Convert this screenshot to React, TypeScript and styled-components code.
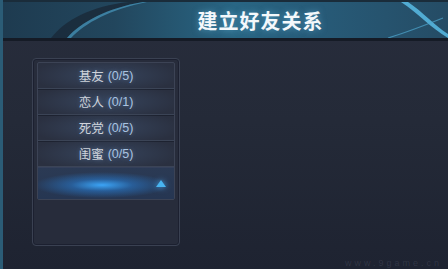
import React from "react";
import styled, { createGlobalStyle } from "styled-components";

const GlobalStyle = createGlobalStyle`
  html, body {
    margin: 0;
    padding: 0;
    background: #1e2331;
  }
  body {
    font-family: "Noto Sans CJK SC", "Liberation Sans", sans-serif;
  }
`;

const Screen = styled.div`
  position: relative;
  width: 448px;
  height: 269px;
  overflow: hidden;
  background: linear-gradient(180deg, #282d3c 0%, #242a38 45%, #1e2331 100%);
  border-left: 3px solid #2b5c76;
  box-sizing: border-box;
  display: flex;
  flex-direction: column;
`;

const Header = styled.div`
  position: relative;
  box-sizing: border-box;
  height: 41px;
  flex: none;
  background: linear-gradient(
    90deg,
    #1e3b50 0%,
    #22465d 25%,
    #296684 52%,
    #275a77 72%,
    #254c65 100%
  );
  border-top: 2px solid #1a2c3a;
  border-bottom: 3px solid #151b26;
  display: flex;
  align-items: center;
  justify-content: center;
`;

const Swoosh = styled.svg`
  position: absolute;
  inset: 0;
  width: 100%;
  height: 100%;
  pointer-events: none;
`;

const Title = styled.h1`
  position: relative;
  margin: 0 0 0 70px;
  font-family: "Noto Sans CJK SC", sans-serif;
  font-size: 20px;
  font-weight: 700;
  letter-spacing: 1px;
  color: #f4f8fb;
  text-shadow: 0 0 6px rgba(120, 200, 240, 0.5);
`;

const Body = styled.div`
  flex: 1;
  padding: 17px 0 0 29px;
  position: relative;
`;

const Panel = styled.div`
  width: 148px;
  height: 188px;
  box-sizing: border-box;
  border: 1px solid #3a4152;
  border-radius: 4px;
  background: #272c3b;
  padding: 3px 4px;
  box-shadow: inset 0 0 0 1px #1c2030;
`;

const List = styled.div`
  border: 1px solid #3c4355;
  border-radius: 2px;
  background: #2a3040;
  display: flex;
  flex-direction: column;
`;

const Row = styled.div`
  box-sizing: border-box;
  height: 26px;
  display: flex;
  align-items: center;
  justify-content: center;
  font-family: "Noto Sans CJK SC", "Liberation Sans", sans-serif;
  font-size: 12.5px;
  color: #cfd3da;
  text-shadow: 0 0 4px rgba(130, 170, 220, 0.4);
  background: radial-gradient(
    ellipse 55% 70% at 50% 50%,
    rgba(70, 95, 130, 0.45),
    rgba(42, 48, 64, 0) 100%
  );
  border-bottom: 1px solid #3b4456;
  box-shadow: 0 1px 0 #1d2230;
`;

const Count = styled.span`
  margin-left: 4px;
  color: #a9c3e0;
  font-family: "Liberation Sans", sans-serif;
`;

const Expander = styled.div`
  position: relative;
  height: 31px;
  display: flex;
  align-items: center;
  justify-content: flex-end;
  padding-right: 8px;
  background: radial-gradient(
      ellipse 50% 42% at 47% 55%,
      rgba(60, 170, 255, 0.95),
      rgba(40, 130, 220, 0.5) 45%,
      rgba(30, 70, 120, 0) 100%
    ),
    linear-gradient(180deg, #2b3a54 0%, #263652 100%);
  border-top: 1px solid #35405a;
`;

const Arrow = styled.svg`
  width: 10px;
  height: 7px;
  filter: drop-shadow(0 0 3px rgba(80, 180, 255, 0.9));
`;

const Watermark = styled.div`
  position: absolute;
  right: 6px;
  bottom: 1px;
  font-family: "Liberation Sans", sans-serif;
  font-size: 9px;
  letter-spacing: 3px;
  color: rgba(160, 170, 190, 0.15);
`;

const rows = [
  { name: "基友", count: "(0/5)" },
  { name: "恋人", count: "(0/1)" },
  { name: "死党", count: "(0/5)" },
  { name: "闺蜜", count: "(0/5)" },
];

export default function App() {
  return (
    <>
      <GlobalStyle />
      <Screen>
        <Header>
          <Swoosh viewBox="0 0 445 36" preserveAspectRatio="none">
            <path
              d="M48 36 C62 18 88 4 126 0 L140 0 C104 6 78 20 64 36 Z"
              fill="#1a2a3a"
              opacity="0.85"
            />
            <path
              d="M64 36 C78 20 104 6 140 0 L144 0 C108 7 82 21 68 36 Z"
              fill="#4fa6cf"
              opacity="0.6"
            />
            <path
              d="M405 0 C420 10 432 24 445 32 L445 36 C428 26 416 12 398 0 Z"
              fill="#5cc3ee"
              opacity="0.8"
            />
            <path
              d="M385 36 C405 30 420 24 440 16"
              stroke="#4fa6cf"
              strokeWidth="1.2"
              fill="none"
              opacity="0.7"
            />
          </Swoosh>
          <Title>建立好友关系</Title>
        </Header>
        <Body>
          <Panel>
            <List>
              {rows.map((r) => (
                <Row key={r.name}>
                  {r.name}
                  <Count>{r.count}</Count>
                </Row>
              ))}
              <Expander>
                <Arrow viewBox="0 0 10 7">
                  <path d="M5 0 L10 7 L0 7 Z" fill="#48b4f0" />
                </Arrow>
              </Expander>
            </List>
          </Panel>
          <Watermark>www.9game.cn</Watermark>
        </Body>
      </Screen>
    </>
  );
}
